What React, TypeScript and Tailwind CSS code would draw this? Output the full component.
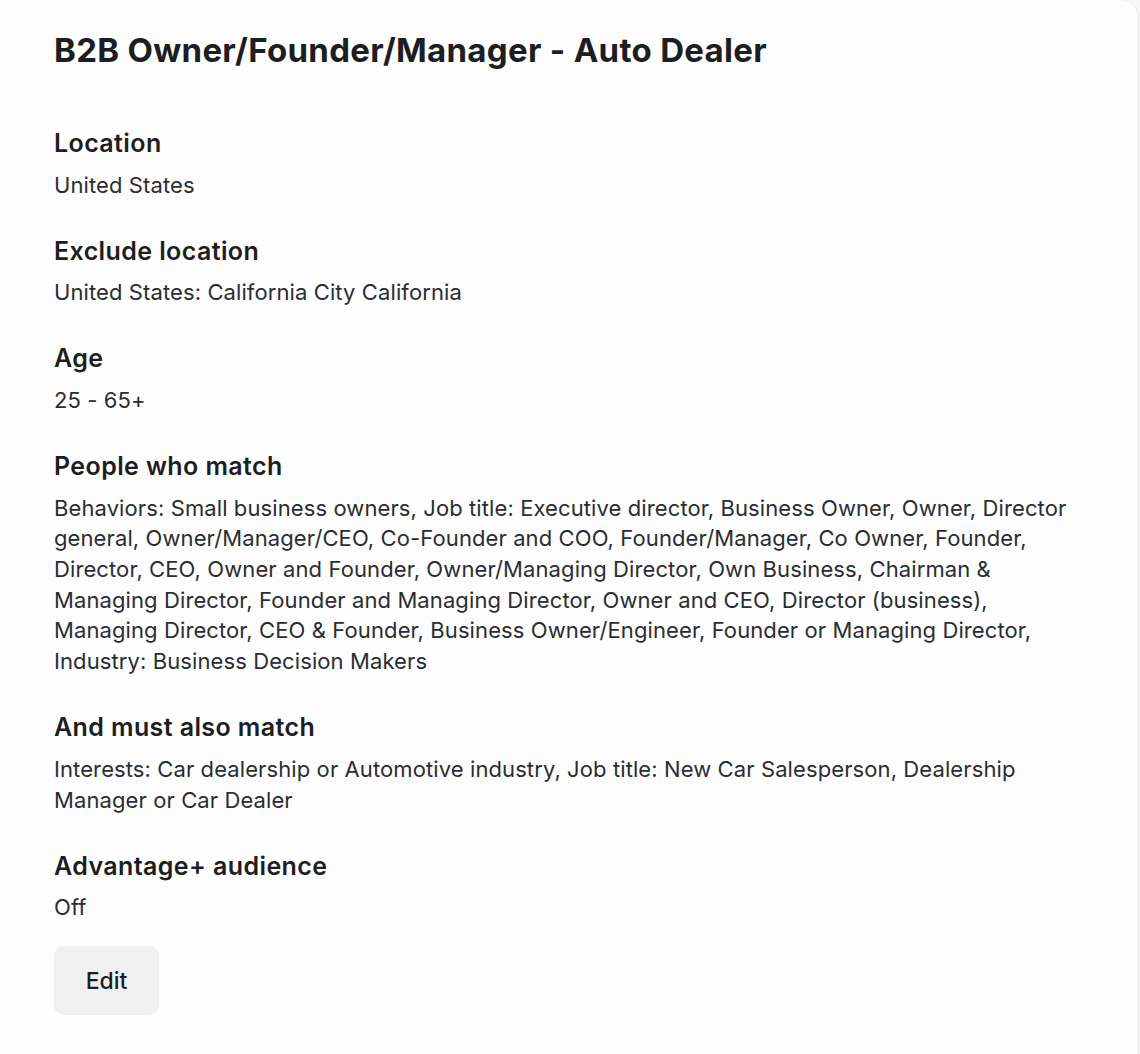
export default function App() {
  const sections: { label: string; value: string }[] = [
    { label: "Location", value: "United States" },
    { label: "Exclude location", value: "United States: California City California" },
    { label: "Age", value: "25 - 65+" },
    {
      label: "People who match",
      value:
        "Behaviors: Small business owners, Job title: Executive director, Business Owner, Owner, Director general, Owner/Manager/CEO, Co-Founder and COO, Founder/Manager, Co Owner, Founder, Director, CEO, Owner and Founder, Owner/Managing Director, Own Business, Chairman & Managing Director, Founder and Managing Director, Owner and CEO, Director (business), Managing Director, CEO & Founder, Business Owner/Engineer, Founder or Managing Director, Industry: Business Decision Makers",
    },
    {
      label: "And must also match",
      value:
        "Interests: Car dealership or Automotive industry, Job title: New Car Salesperson, Dealership Manager or Car Dealer",
    },
    { label: "Advantage+ audience", value: "Off" },
  ];

  return (
    <div
      className="min-h-[1054px] w-[1140px] bg-[#f6f6f6]"
      style={{ fontFamily: "Inter, 'Noto Sans', sans-serif" }}
    >
      <div className="h-[1054px] w-[1139px] rounded-tr-[18px] border-r border-[#e4e6e9] bg-[#fdfdfd] pl-[54px] pt-[30px] text-[#1c1e21]">
        <h1 className="text-[33px] font-bold leading-[40px] tracking-[0.3px]">
          B2B Owner/Founder/Manager - Auto Dealer
        </h1>
        <div className="mt-[57px] flex w-[1022px] flex-col gap-[34.5px]">
          {sections.map((s) => (
            <div key={s.label} className="flex flex-col gap-[10.5px]">
              <h2 className="text-[25px] font-semibold leading-[32px] tracking-[0.4px]">
                {s.label}
              </h2>
              <p className="text-[22px] leading-[30.7px] tracking-[0.1px] text-[#2b2d31]">
                {s.value}
              </p>
            </div>
          ))}
        </div>
        <button className="mt-[23.5px] flex h-[69px] w-[105px] items-center justify-center rounded-[10px] bg-[#f0f0f0] text-[23px] font-medium text-[#1c1e21]">
          Edit
        </button>
      </div>
    </div>
  );
}
